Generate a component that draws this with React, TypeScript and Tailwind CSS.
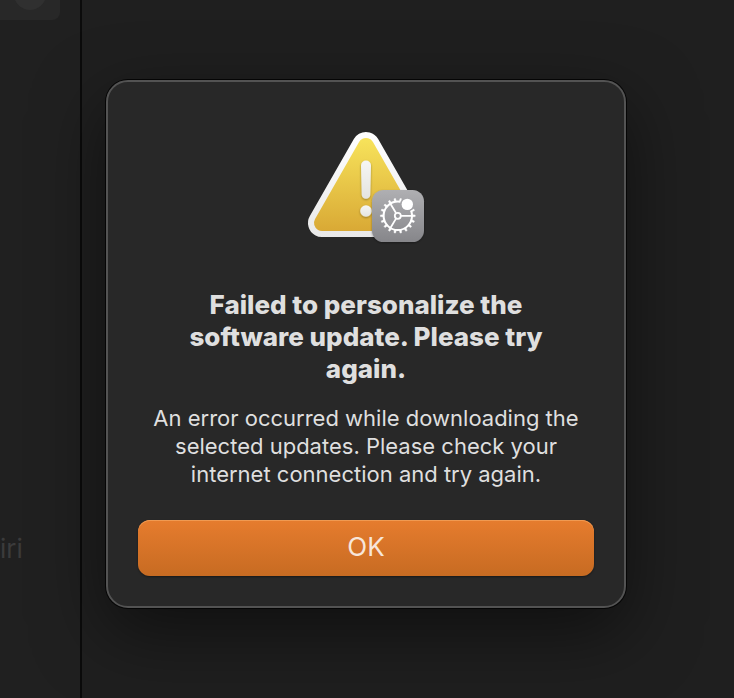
import React from "react";

const teeth = Array.from({ length: 18 }, (_, i) => i * 20);

const AlertIcon: React.FC = () => (
  <svg width="128" height="120" viewBox="0 0 128 120" aria-hidden="true">
    <defs>
      <linearGradient id="edge" gradientUnits="userSpaceOnUse" x1="0" y1="6" x2="0" y2="111">
        <stop offset="0" stopColor="#ffffff" />
        <stop offset="1" stopColor="#e9e9e9" />
      </linearGradient>
      <linearGradient id="yellow" gradientUnits="userSpaceOnUse" x1="0" y1="12" x2="0" y2="105">
        <stop offset="0" stopColor="#f7e35b" />
        <stop offset="1" stopColor="#d9a935" />
      </linearGradient>
      <linearGradient id="mark" x1="0" y1="0" x2="0" y2="1">
        <stop offset="0" stopColor="#f6f6f4" />
        <stop offset="1" stopColor="#e4e4e0" />
      </linearGradient>
      <linearGradient id="badge" x1="0" y1="0" x2="0" y2="1">
        <stop offset="0" stopColor="#afafb2" />
        <stop offset="1" stopColor="#86868a" />
      </linearGradient>
      <filter id="soft" x="-20%" y="-20%" width="140%" height="140%">
        <feDropShadow dx="0" dy="1" stdDeviation="1" floodColor="#000" floodOpacity="0.35" />
      </filter>
      <mask id="notch" maskUnits="userSpaceOnUse" x="70" y="64" width="52" height="52">
        <rect x="70" y="64" width="52" height="52" fill="#fff" />
        <circle cx="105.3" cy="78.4" r="7.2" fill="#000" />
      </mask>
    </defs>

    {/* Warning triangle */}
    <path d="M64 20 20 97h88z" fill="url(#edge)" stroke="url(#edge)" strokeWidth="28" strokeLinejoin="round" />
    <path d="M64 20 20 97h88z" fill="url(#yellow)" stroke="url(#yellow)" strokeWidth="16" strokeLinejoin="round" />
    <g fill="url(#mark)" filter="url(#soft)">
      <path d="M59 39.5a5 5 0 0 1 10 0L68.3 68.5a4.3 4.3 0 0 1-8.6 0z" />
      <circle cx="64" cy="85" r="5.8" />
    </g>

    {/* Software update badge */}
    <rect x="70" y="64" width="52" height="52" rx="11.5" fill="url(#badge)" filter="url(#soft)" />
    <g mask="url(#notch)" stroke="#fff" fill="none">
      <circle cx="95.8" cy="89.8" r="14.2" strokeWidth="2" />
      {teeth.map((angle) => (
        <path key={angle} d="M94.7 75.8 95 72.4h1.6l.3 3.4z" fill="#fff" strokeWidth="0.4" transform={`rotate(${angle + 10} 95.8 89.8)`} />
      ))}
      <circle cx="95.8" cy="89.8" r="3" strokeWidth="1.8" />
      <path d="M99 89.8H110M94 87 88.4 77.8M94 92.6 88.4 102" strokeWidth="1.8" />
    </g>
    <circle cx="105.3" cy="78.4" r="5.7" fill="#fff" />
  </svg>
);

const App: React.FC = () => {
  return (
    <div className="relative min-h-screen overflow-hidden bg-[#1f1f1f] font-['Inter',sans-serif]">
      <div className="flex min-h-screen">
        {/* Sidebar */}
        <aside className="w-[82px] shrink-0 border-r-2 border-[#0b0b0b] bg-[#202020]">
          <div className="mr-5 flex h-5 justify-center overflow-hidden rounded-br-lg bg-[#282828]">
            <div className="-mt-[22px] size-8 rounded-full bg-[#303030]" />
          </div>
          <div className="mt-[513px] text-[26px] leading-8 text-[#3b3b3b]">iri</div>
        </aside>
        <main className="flex-1" />
      </div>

      {/* Modal */}
      <div className="absolute inset-0 flex items-start justify-center pt-20 pr-0.5">
        <div
          role="alertdialog"
          aria-labelledby="alert-title"
          aria-describedby="alert-text"
          className="flex w-full max-w-[520px] flex-col items-center rounded-[22px] border-2 border-[#535353] bg-[#282828] px-[30px] pt-11 pb-[30px] text-center shadow-[0_0_0_1px_#050505,0_24px_70px_rgba(0,0,0,0.5)]"
        >
          <AlertIcon />
          <h1 id="alert-title" className="mt-[43px] max-w-[400px] text-[26px] leading-8 font-extrabold text-[#dfdfdf]">
            Failed to personalize the software update. Please try again.
          </h1>
          <p id="alert-text" className="mt-[19px] text-[22px] leading-7 text-[#dfdfdf]">
            An error occurred while downloading the selected updates. Please check your internet connection and try
            again.
          </p>
          <button
            type="button"
            className="mt-8 h-14 w-full rounded-xl bg-gradient-to-b from-[#e67c2e] to-[#c76b22] pb-1 text-[26px] text-[#f7e6da] shadow-[inset_0_1px_0_#f09a52,0_1px_2px_rgba(0,0,0,0.4)]"
          >
            OK
          </button>
        </div>
      </div>
    </div>
  );
};

export default App;
